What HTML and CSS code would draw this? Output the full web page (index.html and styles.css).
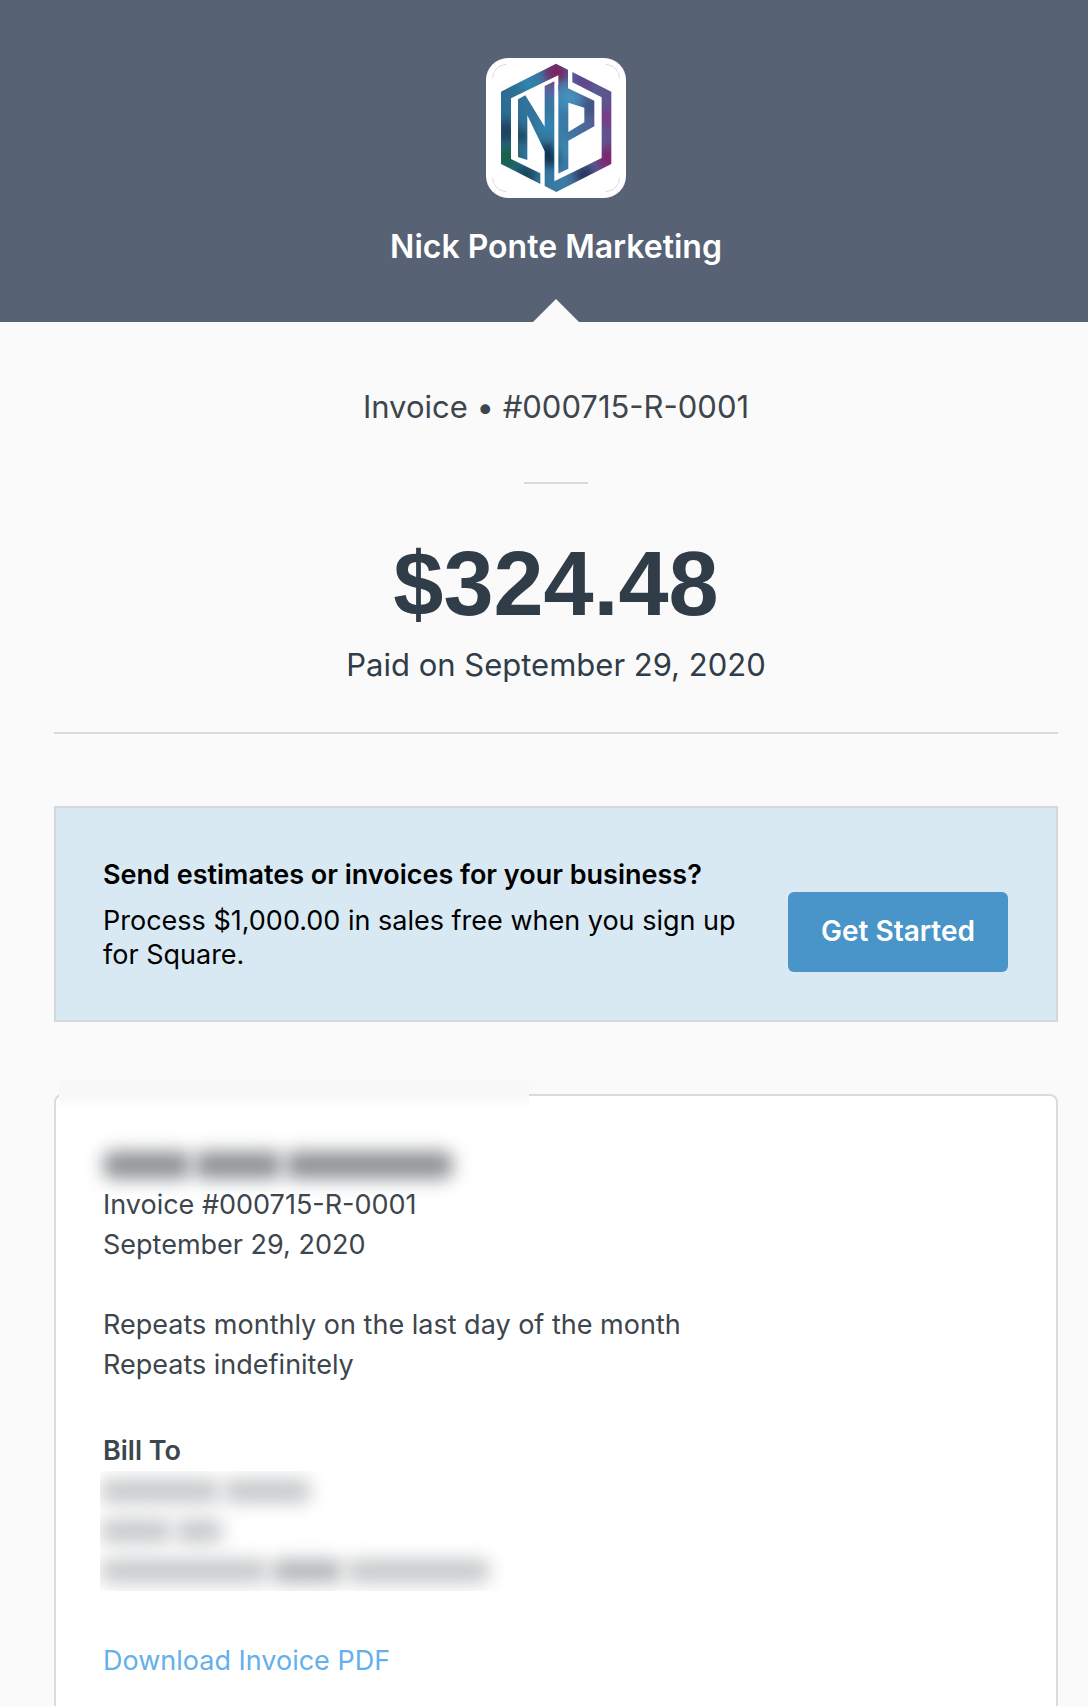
FILE: index.html
```html
<!DOCTYPE html>
<html lang="en">
<head>
<meta charset="utf-8">
<meta name="viewport" content="width=device-width, initial-scale=1">
<title>Invoice #000715-R-0001</title>
<link rel="stylesheet" href="styles.css">
</head>
<body>
<header class="merchant">
  <svg class="merchant-logo" viewBox="0 0 420 420" role="img" aria-label="Nick Ponte Marketing logo">
    <defs>
      <filter id="soft" x="-20%" y="-20%" width="140%" height="140%"><feGaussianBlur stdDeviation="14"/></filter>
      <linearGradient id="ink" x1="0" y1="0" x2="1" y2="0">
        <stop offset="0" stop-color="#28688c"/><stop offset=".55" stop-color="#3a7ca6"/><stop offset="1" stop-color="#704282"/>
      </linearGradient>
      <mask id="shape">
        <g fill="#fff">
          <path d="M210 17L246 35V100H217V52L75 121V303L163 346V378L45 318V101Z"/>
          <path d="M259 42L376 101V318L211 402L176 384V280L124 172V306L96 297V124L118 112L176 206V84L205 70V370L347 300V118L259 73Z"/>
          <path fill-rule="evenodd" d="M217 80L246 91L325 128V205L247 248V332L219 346H217ZM247 134V222L295 193V149Z"/>
        </g>
      </mask>
    </defs>
    <rect width="420" height="420" rx="66" fill="#fff"/>
    <path d="M19 60Q24 24 60 19M360 19Q396 24 401 60M401 360Q396 396 360 401M60 401Q24 396 19 360" fill="none" stroke="#c5c8cc" stroke-width="2"/>
    <g mask="url(#shape)">
      <rect width="420" height="420" fill="url(#ink)"/>
      <g filter="url(#soft)">
        <circle cx="210" cy="40" r="36" fill="#7b2062"/>
        <circle cx="192" cy="92" r="20" fill="#71519a"/>
        <circle cx="290" cy="75" r="32" fill="#65418b"/>
        <circle cx="362" cy="180" r="28" fill="#7c3b88"/>
        <circle cx="365" cy="300" r="34" fill="#7c266f"/>
        <circle cx="60" cy="220" r="34" fill="#1c4262"/>
        <circle cx="65" cy="298" r="36" fill="#17604c"/>
        <circle cx="120" cy="350" r="30" fill="#154459"/>
        <circle cx="110" cy="235" r="22" fill="#1d4a62"/>
        <circle cx="190" cy="290" r="34" fill="#0d2d4b"/>
        <circle cx="185" cy="205" r="24" fill="#2f88b4"/>
        <circle cx="295" cy="350" r="28" fill="#263358"/>
        <circle cx="250" cy="120" r="36" fill="#4490ba"/>
        <circle cx="130" cy="75" r="28" fill="#3085b0"/>
        <circle cx="235" cy="270" r="28" fill="#3b88b0"/>
        <circle cx="312" cy="145" r="28" fill="#3e5382"/>
      </g>
    </g>
  </svg>
  <h1 class="merchant-name">Nick Ponte Marketing</h1>
</header>
<main class="page">
  <section class="summary">
    <p class="summary-line">Invoice • #000715-R-0001</p>
    <hr class="short-rule">
    <p class="amount">$324.48</p>
    <p class="summary-line paid">Paid on September 29, 2020</p>
  </section>
  <section class="promo">
    <div class="promo-copy">
      <h2 class="promo-title">Send estimates or invoices for your business?</h2>
      <p class="promo-text">Process $1,000.00 in sales free when you sign up for Square.</p>
    </div>
    <button class="promo-button" type="button">Get Started</button>
  </section>
  <section class="details">
    <div class="redacted redacted-title" aria-hidden="true"><i class="w-88"></i><i class="w-88"></i><i class="w-168"></i></div>
    <p>Invoice #000715-R-0001</p>
    <p>September 29, 2020</p>
    <div class="schedule">
      <p>Repeats monthly on the last day of the month</p>
      <p>Repeats indefinitely</p>
    </div>
    <h2 class="details-heading">Bill To</h2>
    <div class="redacted-group" aria-hidden="true">
      <div class="redacted"><i class="w-120"></i><i class="w-88"></i></div>
      <div class="redacted"><i class="w-72"></i><i class="w-48"></i></div>
      <div class="redacted"><i class="w-168"></i><i class="w-72 dark"></i><i class="w-144"></i></div>
    </div>
    <a class="download" href="#">Download Invoice PDF</a>
  </section>
</main>
</body>
</html>
```
FILE: styles.css
```css
* { box-sizing: border-box; }

body {
  margin: 0;
  background: #fafafa;
  color: #3d454d;
  font-family: Inter, "Liberation Sans", Arial, sans-serif;
  font-size: 27px;
  line-height: 40px;
}

h1, h2, p { margin: 0; }

.merchant {
  position: relative;
  display: flex;
  flex-direction: column;
  align-items: center;
  gap: 29px;
  padding: 58px 30px 55px 54px;
  background: #576274;
}

.merchant::after {
  content: "";
  position: absolute;
  bottom: 0;
  left: calc(50% + 12px);
  width: 46px;
  height: 23px;
  background: #fafafa;
  clip-path: polygon(50% 0, 100% 100%, 0 100%);
  transform: translateX(-50%);
}

.merchant-logo { display: block; width: 140px; height: 140px; }

.merchant-name { color: #fff; font-size: 32px; font-weight: 600; }

.page { padding: 0 30px 0 54px; }

.summary {
  padding: 65px 0 47px;
  border-bottom: 2px solid #d5dadd;
  text-align: center;
}

.summary-line { font-size: 31px; }

.short-rule {
  width: 64px;
  height: 2px;
  margin: 55px auto 52px;
  border: 0;
  background: #d5dadd;
}

.amount {
  margin-bottom: 13px;
  color: #303c48;
  font-family: "Liberation Sans", Arial, sans-serif;
  font-size: 90px;
  font-weight: 700;
  line-height: 96px;
}

.paid { color: #303c48; }

.promo {
  display: flex;
  align-items: flex-end;
  gap: 40px;
  margin: 72px 0;
  padding: 50px 48px 48px 47px;
  border: 2px solid #d3d8dd;
  background: #d9e9f3;
  color: #000;
  line-height: 34px;
}

.promo-copy { flex: 1; }

.promo-title { margin-bottom: 12px; font-size: 27px; font-weight: 600; }

.promo-button {
  padding: 19px 33px 21px;
  border: 0;
  border-radius: 6px;
  background: #4994c8;
  color: #fff;
  font-family: inherit;
  font-size: 28px;
  font-weight: 600;
  line-height: 40px;
  white-space: nowrap;
}

.details {
  position: relative;
  padding: 49px 47px 25px;
  border: 2px solid #dadbdc;
  border-bottom: 0;
  border-radius: 8px 8px 0 0;
  background: #fff;
}

/* Smudge over the left part of the card's top edge */
.details::before {
  content: "";
  position: absolute;
  top: -16px;
  left: 3px;
  width: 470px;
  height: 30px;
  background: linear-gradient(#f9f9f9, #f7f7f7 40%, #fff);
}

.schedule { margin: 40px 0 46px; }

.details-heading { font-size: 27px; font-weight: 600; }

.redacted {
  display: flex;
  align-items: center;
  gap: 3px;
  height: 40px;
}

.redacted i {
  height: 24px;
  border-radius: 10px;
  background: #c6c8ca;
  filter: blur(9px);
}

.redacted .dark { background: #b4b7b9; }

.redacted-title i { height: 28px; background: #8f9296; }

.redacted-group {
  margin: 0 0 50px -3px;
  overflow: hidden;
}

.w-48 { width: 48px; }
.w-72 { width: 72px; }
.w-88 { width: 88px; }
.w-120 { width: 120px; }
.w-144 { width: 144px; }
.w-168 { width: 168px; }

.download { display: block; width: fit-content; color: #65b0ea; text-decoration: none; }
```
